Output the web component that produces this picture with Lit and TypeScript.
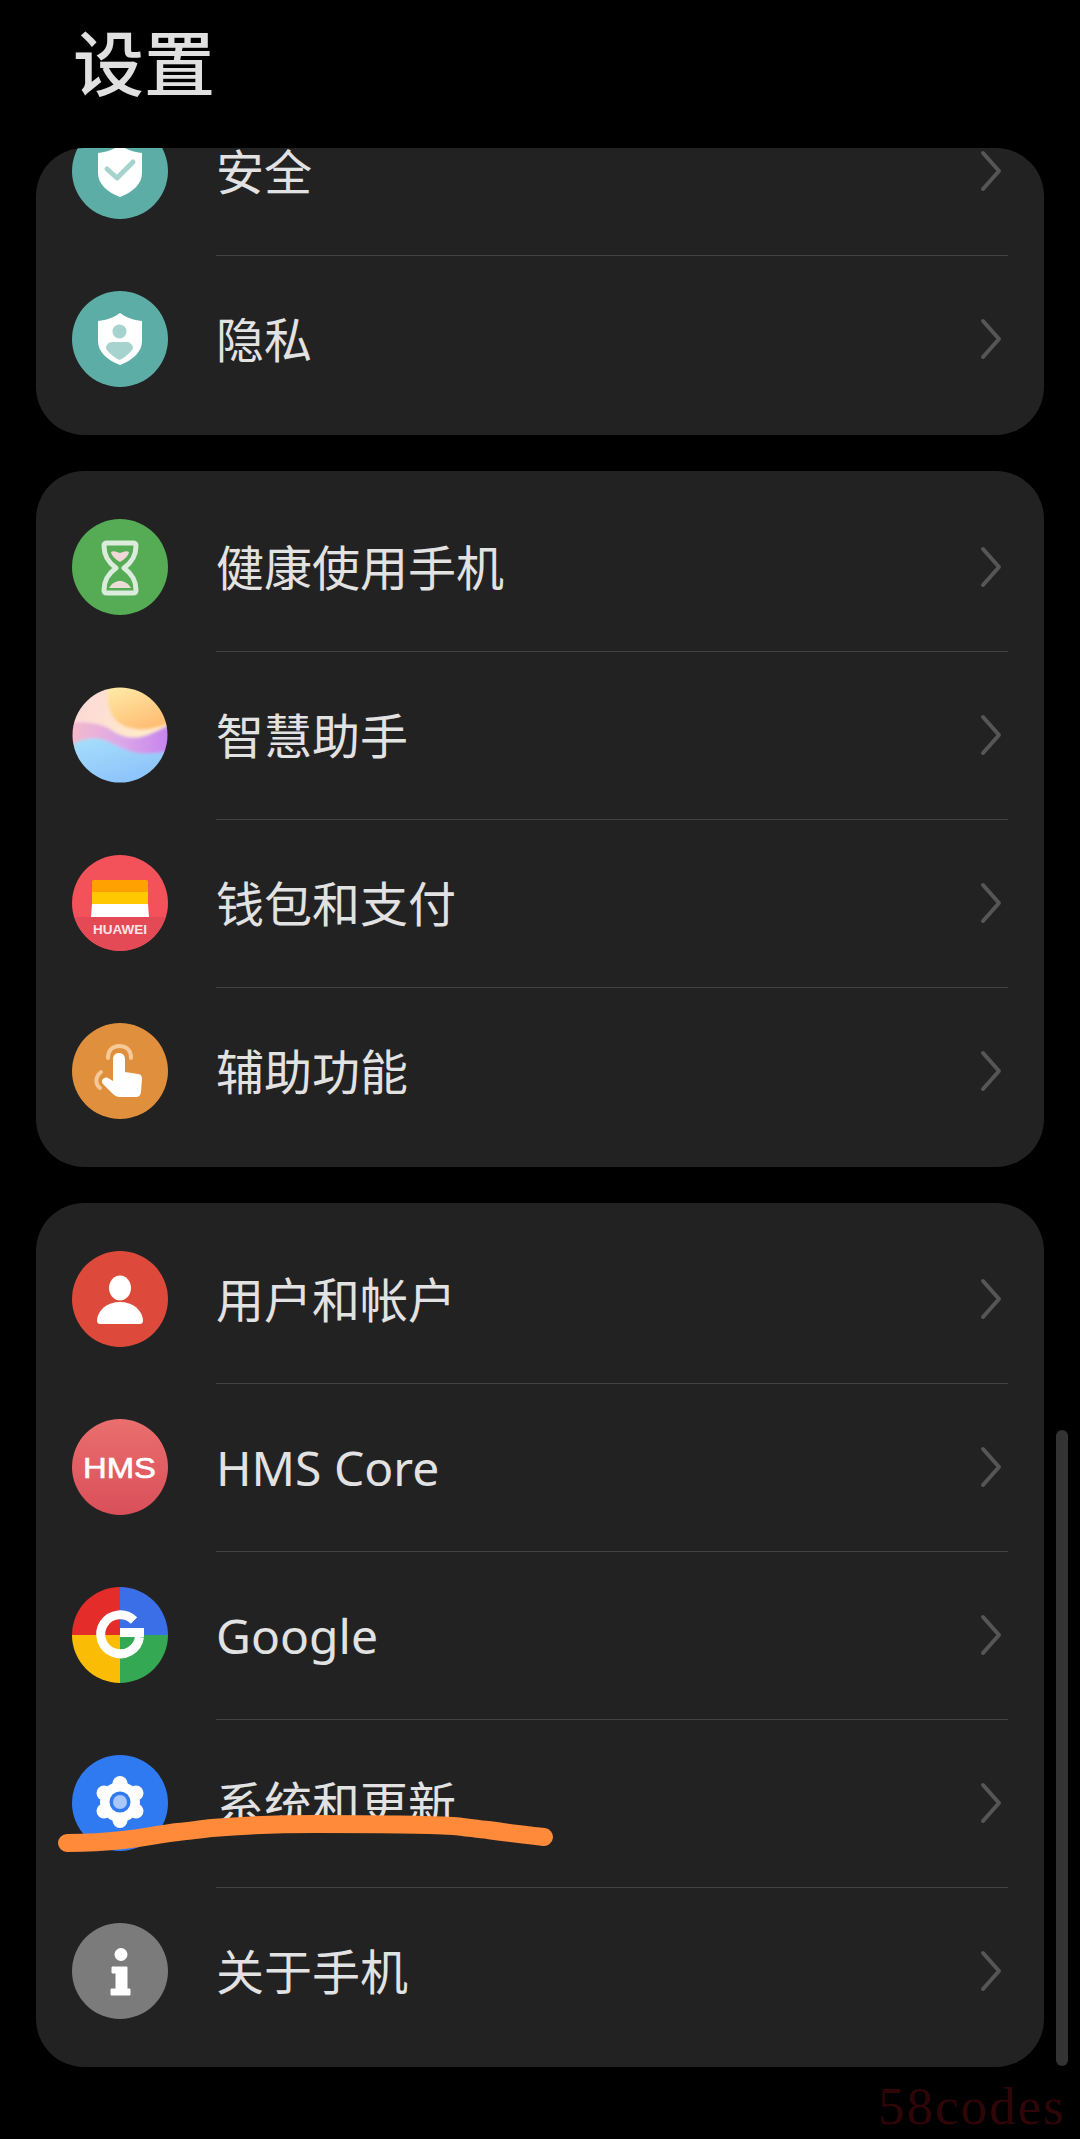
import { LitElement, html, css, svg } from 'lit';
import { customElement } from 'lit/decorators.js';

const shield = svg`<path fill="#fff" d="M48 22c6 4.500 13 7 22 8v20c0 11-9 19-22 24-13-5-22-13-22-24V30c9-1 16-3.500 22-8z"/>`;

const icons = {
  security: svg`<circle cx="48" cy="48" r="48" fill="#5cada5"/>${shield}
    <path d="M35 46l10 9 16-16" fill="none" stroke="#a6d3ce" stroke-width="5" stroke-linecap="round" stroke-linejoin="round"/>`,
  privacy: svg`<circle cx="48" cy="48" r="48" fill="#5cada5"/>${shield}
    <circle cx="47.500" cy="40.500" r="7" fill="#a6d3ce"/>
    <path d="M40 51h15c3 0 6 3 6 6 0 2-8 10-13.500 12C42 67 34 59 34 57c0-3 3-6 6-6z" fill="#a6d3ce"/>`,
  health: svg`<circle cx="48" cy="48" r="48" fill="#56ab55"/>
    <path d="M35 24h26c2 0 3 1 3 3 0 10-4 16-12 22 8 6 12 12 12 22 0 2-1 3-3 3H35c-2 0-3-1-3-3 0-10 4-16 12-22-8-6-12-12-12-22 0-2 1-3 3-3z" fill="none" stroke="#dcecdc" stroke-width="5" stroke-linejoin="round"/>
    <path d="M39 33c3-2 6 0 9 1 3-1 6-3 9-1 0 3-5 8-9 10-4-2-9-7-9-10z" fill="#f0d8d8"/>
    <path d="M37 69c3-5 7-7 11-7s8 2 11 7z" fill="#ecdcd8"/>`,
  assistant: svg`<defs>
      <linearGradient id="as-base" x1="0" y1="0" x2="1" y2="0.300"><stop offset="0" stop-color="#fcd6dc"/><stop offset="1" stop-color="#fff0c4"/></linearGradient>
      <linearGradient id="as-orange" x1="0.300" y1="0" x2="0.800" y2="1"><stop offset="0" stop-color="#ffeaa8"/><stop offset="1" stop-color="#ffb86c"/></linearGradient>
      <linearGradient id="as-band" x1="0" y1="0" x2="1" y2="0"><stop offset="0" stop-color="#f8bcc8"/><stop offset="0.500" stop-color="#dca8e8"/><stop offset="1" stop-color="#c480ee"/></linearGradient>
      <linearGradient id="as-blue" x1="0" y1="0" x2="0.600" y2="1"><stop offset="0" stop-color="#a8e0fa"/><stop offset="1" stop-color="#88c0fc"/></linearGradient>
      <clipPath id="as-clip"><circle cx="48" cy="48" r="47.500"/></clipPath>
      <filter id="as-soft" x="-10%" y="-10%" width="120%" height="120%"><feGaussianBlur stdDeviation="1.600"/></filter>
    </defs>
    <g clip-path="url(#as-clip)">
      <g filter="url(#as-soft)">
        <rect x="-6" y="-6" width="108" height="108" fill="url(#as-base)"/>
        <path d="M36-6c-2 20 0 36 14 44 14 7 30 6 52-4V-6z" fill="url(#as-orange)"/>
        <path d="M-6 36c20-2 34 0 44 6 12 9 24 10 34 7 10-3 18-8 30-13v66H-6z" fill="url(#as-band)"/>
        <path d="M-6 61c14-9 26-12 38-8 10 3 20 11 34 13 12 1 22 0 36-3v39H-6z" fill="url(#as-blue)"/>
      </g>
    </g>`,
  wallet: svg`<circle cx="48" cy="48" r="48" fill="#f4525a"/>
    <path d="M2.500 62h91A48 48 0 0 1 48 96 48 48 0 0 1 2.500 62z" fill="#e34a56"/>
    <path d="M22 25h52c1.500 0 2 1 2 2v10H20V27c0-1 .500-2 2-2z" fill="#ffa100"/>
    <rect x="20" y="37" width="56" height="12" fill="#ffc800"/>
    <path d="M20 49h56l1 13H19z" fill="#fff"/>
    <text x="21" y="79" font-family="Liberation Sans, sans-serif" font-size="12.500" font-weight="700" fill="#fbe4e4" textLength="54" lengthAdjust="spacingAndGlyphs">HUAWEI</text>`,
  access: svg`<circle cx="48" cy="48" r="48" fill="#e08f3d"/>
    <path d="M36 35c0-8 5-12 11.500-12S59 27 59 35" fill="none" stroke="#f6c998" stroke-width="4" stroke-linecap="round"/>
    <path d="M28 65c-5-4-5-11 1-16" fill="none" stroke="#f6c998" stroke-width="4" stroke-linecap="round"/>
    <path d="M41 36c0-8 12-8 12 0v13l13 2c3 .500 4 2 4 5l-1 13c-.200 3-2 5-5 5H48c-3 0-5-1-7-3L31 61c-3-3 1-8 5-6l5 3z" fill="#fff"/>`,
  user: svg`<circle cx="48" cy="48" r="48" fill="#dd4a3b"/>
    <ellipse cx="48" cy="37" rx="11" ry="12.500" fill="#fff"/>
    <path d="M48 51c13 0 22 8 23 18 0 3-1 4-4 4H29c-3 0-4-1-4-4 1-10 10-18 23-18z" fill="#fff"/>`,
  hms: svg`<defs><linearGradient id="hms-bg" x1="0" y1="0" x2="0" y2="1"><stop offset="0" stop-color="#ea6f6e"/><stop offset="1" stop-color="#d94f59"/></linearGradient></defs>
    <circle cx="48" cy="48" r="48" fill="url(#hms-bg)"/>
    <text x="11" y="58.500" font-family="Liberation Sans, sans-serif" font-size="29" fill="#fff" stroke="#fff" stroke-width="0.600" textLength="73" lengthAdjust="spacingAndGlyphs">HMS</text>`,
  google: svg`<path d="M48 48V0A48 48 0 0 0 0 48z" fill="#e42d2b"/>
    <path d="M48 48V0a48 48 0 0 1 48 48z" fill="#3a6fe8"/>
    <path d="M48 48H0a48 48 0 0 0 48 48z" fill="#fbbc05"/>
    <path d="M48 48h48a48 48 0 0 1-48 48z" fill="#34a853"/>
    <path d="M62 33.500A19.500 19.500 0 1 0 67.500 50" fill="none" stroke="#fff" stroke-width="9"/>
    <rect x="48" y="41" width="24" height="9" fill="#fff"/>`,
  system: svg`<circle cx="48" cy="48" r="48" fill="#2f7af0"/>
    <g fill="#fff">
      <circle cx="48" cy="47" r="20"/>
      <circle cx="48" cy="28.500" r="7.500"/><circle cx="48" cy="65.500" r="7.500"/>
      <circle cx="32" cy="38" r="7.500"/><circle cx="64" cy="38" r="7.500"/>
      <circle cx="32" cy="56" r="7.500"/><circle cx="64" cy="56" r="7.500"/>
    </g>
    <circle cx="48" cy="47" r="10.500" fill="#2f7af0"/>
    <circle cx="48" cy="47" r="7" fill="#a9c8f8"/>`,
  about: svg`<circle cx="48" cy="48" r="48" fill="#7b7b7b"/>
    <circle cx="49" cy="31.500" r="6.500" fill="#fff"/>
    <path d="M40 44h15v22h3v6H39v-6h5V50h-4z" fill="#fff" stroke="#fff" stroke-width="1" stroke-linejoin="round"/>`,
};

type IconName = keyof typeof icons;

const groups: { label: string; icon: IconName }[][] = [
  [
    { label: '安全', icon: 'security' },
    { label: '隐私', icon: 'privacy' },
  ],
  [
    { label: '健康使用手机', icon: 'health' },
    { label: '智慧助手', icon: 'assistant' },
    { label: '钱包和支付', icon: 'wallet' },
    { label: '辅助功能', icon: 'access' },
  ],
  [
    { label: '用户和帐户', icon: 'user' },
    { label: 'HMS Core', icon: 'hms' },
    { label: 'Google', icon: 'google' },
    { label: '系统和更新', icon: 'system' },
    { label: '关于手机', icon: 'about' },
  ],
];

@customElement('app-root')
export class AppRoot extends LitElement {
  static styles = css`
    :host {
      display: block;
      position: relative;
      height: 2139px;
      overflow: hidden;
      background: #000;
      font-family: "Noto Sans", "Noto Sans CJK SC", sans-serif;
    }

    .header {
      height: 148px;
      box-sizing: border-box;
      padding-left: 73px;
    }

    h1 {
      margin: 0;
      padding-top: 14px;
      font-size: 71px;
      line-height: 98px;
      font-weight: 500;
      color: #e0e0e0;
    }

    .viewport {
      height: 1991px;
      margin: 0 36px;
      overflow: hidden;
      border-radius: 48px 48px 0 0;
    }

    .list {
      display: flex;
      flex-direction: column;
      gap: 36px;
      margin-top: -73px;
    }

    .card {
      background: #222222;
      border-radius: 48px;
      padding: 12px 36px;
    }

    .row {
      display: flex;
      align-items: center;
      gap: 48px;
      height: 168px;
    }

    .icon {
      flex: none;
      width: 96px;
      height: 96px;
    }

    .body {
      flex: 1;
      align-self: flex-start;
      height: 100%;
      display: flex;
      align-items: center;
      justify-content: space-between;
      border-bottom: 1px solid #444444;
    }

    .row:last-child .body {
      border-bottom: none;
    }

    .label {
      font-size: 48px;
      line-height: 60px;
      color: #e2e2e2;
      padding-top: 2px;
    }

    .chevron {
      width: 24px;
      height: 42px;
      margin-right: 6px;
    }

    .scrollbar {
      position: absolute;
      left: 1056px;
      top: 1430px;
      width: 12px;
      height: 636px;
      border-radius: 6px;
      background: #333333;
    }

    .stroke {
      position: absolute;
      left: 0;
      top: 1800px;
      width: 600px;
      height: 70px;
    }

    .watermark {
      position: absolute;
      right: 14px;
      top: 2076px;
      font-family: "Liberation Serif", serif;
      font-size: 53px;
      line-height: 60px;
      letter-spacing: 2px;
      color: #2e0608;
    }
  `;

  renderRow(item: { label: string; icon: IconName }) {
    return html`
      <div class="row">
        <svg class="icon" viewBox="0 0 96 96">${icons[item.icon]}</svg>
        <div class="body">
          <span class="label">${item.label}</span>
          <svg class="chevron" viewBox="0 0 24 42">
            <path d="M5 3L21 21 5 39" fill="none" stroke="#565656" stroke-width="4" stroke-linecap="round" stroke-linejoin="round"/>
          </svg>
        </div>
      </div>
    `;
  }

  render() {
    return html`
      <div class="header"><h1>设置</h1></div>
      <div class="viewport">
        <div class="list">
          ${groups.map(group => html`<section class="card">${group.map(item => this.renderRow(item))}</section>`)}
        </div>
      </div>
      <div class="scrollbar"></div>
      <svg class="stroke" viewBox="0 1800 600 70">
        <path d="M67 1843c20 0 38-1 56-3 20-2 37-6 55-8 12-1 23-3 34-4 36-3 68-4 103-4 50 0 100 0 138 2 12 1 24 3 35 4 20 3 38 5 56 7" fill="none" stroke="#ff8b3a" stroke-width="18" stroke-linecap="round"/>
      </svg>
      <div class="watermark">58codes</div>
    `;
  }
}
